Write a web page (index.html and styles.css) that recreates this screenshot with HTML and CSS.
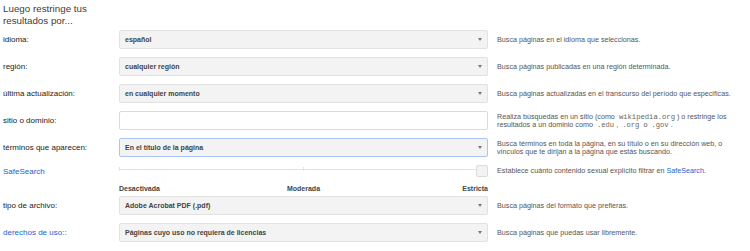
FILE: index.html
```html
<!DOCTYPE html>
<html lang="es">
<head>
    <meta charset="UTF-8">
    <title>Búsqueda avanzada</title>
    <link rel="stylesheet" href="styles.css">
</head>
<body>
    <div class="container">
        <h2 class="title">Luego restringe tus resultados por...</h2>

        <div class="row">
            <label class="label">idioma:</label>
            <div class="select"><span>español</span><span class="arrow"></span></div>
            <p class="hint">Busca páginas en el idioma que seleccionas.</p>
        </div>

        <div class="row">
            <label class="label">región:</label>
            <div class="select"><span>cualquier región</span><span class="arrow"></span></div>
            <p class="hint">Busca páginas publicadas en una región determinada.</p>
        </div>

        <div class="row">
            <label class="label">última actualización:</label>
            <div class="select"><span>en cualquier momento</span><span class="arrow"></span></div>
            <p class="hint">Busca páginas actualizadas en el transcurso del período que especificas.</p>
        </div>

        <div class="row">
            <label class="label">sitio o dominio:</label>
            <input class="text-input" type="text">
            <p class="hint">Realiza búsquedas en un sitio (como <code>wikipedia.org</code>) o restringe los resultados a un dominio como <code>.edu</code>, <code>.org</code> o <code>.gov</code>.</p>
        </div>

        <div class="row">
            <label class="label">términos que aparecen:</label>
            <div class="select focused"><span>En el título de la página</span><span class="arrow"></span></div>
            <p class="hint">Busca términos en toda la página, en su título o en su dirección web, o vínculos que te dirijan a la página que estás buscando.</p>
        </div>

        <div class="row slider-row">
            <a class="label link" href="#">SafeSearch</a>
            <div class="slider">
                <span class="tick tick-left"></span>
                <span class="tick tick-mid"></span>
                <span class="thumb"></span>
            </div>
            <p class="hint">Establece cuánto contenido sexual explícito filtrar en <a class="link" href="#">SafeSearch</a>.</p>
        </div>
        <div class="row levels-row">
            <span></span>
            <div class="levels">
                <span>Desactivada</span>
                <span class="mid">Moderada</span>
                <span class="end">Estricta</span>
            </div>
            <span></span>
        </div>

        <div class="row">
            <label class="label">tipo de archivo:</label>
            <div class="select"><span>Adobe Acrobat PDF (.pdf)</span><span class="arrow"></span></div>
            <p class="hint">Busca páginas del formato que prefieras.</p>
        </div>

        <div class="row">
            <a class="label link" href="#">derechos de uso::</a>
            <div class="select"><span>Páginas cuyo uso no requiera de licencias</span><span class="arrow"></span></div>
            <p class="hint">Busca páginas que puedas usar libremente.</p>
        </div>
    </div>
</body>
</html>
```

FILE: styles.css
```css
body {
    font-family: "Liberation Sans", Arial, sans-serif;
    margin: 0;
    padding: 0;
    background-color: #fff;
    color: #222;
}
.container {
    padding: 3px 0 0 3px;
    width: 740px;
}
.title {
    font-size: 9.8px;
    font-weight: normal;
    line-height: 12px;
    color: #3c3c3c;
    width: 95px;
    margin: 0 0 3px;
    height: 24px;
}
.row {
    display: grid;
    grid-template-columns: 107px 369px 240px;
    grid-template-rows: 19px;
    column-gap: 9px;
    align-items: center;
    margin-bottom: 8px;
}
.label {
    font-size: 8px;
    color: #222;
}
.link {
    color: #1a62d4;
    text-decoration: none;
}
.select {
    display: flex;
    justify-content: space-between;
    align-items: center;
    box-sizing: border-box;
    height: 19px;
    padding: 0 5px 0 5px;
    background-color: #f3f3f3;
    border: 1px solid #e2e2e2;
    border-radius: 2px;
    font-size: 7px;
    font-weight: bold;
    color: #444;
}
.select.focused {
    border-color: #a9c4f5;
}
.arrow {
    width: 0;
    height: 0;
    border-left: 2px solid transparent;
    border-right: 2px solid transparent;
    border-top: 3px solid #777;
}
.text-input {
    box-sizing: border-box;
    height: 19px;
    margin: 0;
    border: 1px solid #d9d9d9;
    border-radius: 2px;
    background-color: #fff;
}
.hint {
    margin: 0;
    font-size: 7.2px;
    line-height: 8px;
    color: #555;
}
.hint code {
    font-family: "Liberation Mono", "Courier New", monospace;
    font-size: 7.2px;
    color: #666;
    padding: 0 2px;
}
.slider-row {
    grid-template-rows: 12px;
    margin-bottom: 6px;
}
.slider {
    position: relative;
    height: 12px;
}
.slider::before {
    content: "";
    position: absolute;
    left: 0;
    right: 6px;
    top: 4px;
    height: 1px;
    background-color: #e3e3e3;
}
.tick {
    position: absolute;
    top: 2px;
    width: 1px;
    height: 4px;
    background-color: #e3e3e3;
}
.tick-left {
    left: 0;
}
.tick-mid {
    left: 184px;
}
.thumb {
    position: absolute;
    right: 0;
    top: 0;
    box-sizing: border-box;
    width: 12px;
    height: 12px;
    background-color: #f3f3f3;
    border: 1px solid #dcdcdc;
    border-radius: 2px;
}
.levels-row {
    grid-template-rows: 10px;
    margin-bottom: 3px;
}
.levels {
    display: grid;
    grid-template-columns: 1fr 1fr 1fr;
    font-size: 7px;
    font-weight: bold;
    color: #444;
}
.levels .mid {
    text-align: center;
}
.levels .end {
    text-align: right;
}
```
